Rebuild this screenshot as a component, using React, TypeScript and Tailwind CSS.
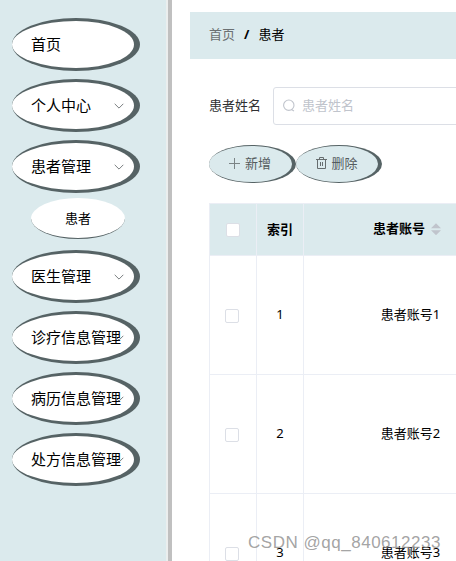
import React, { FunctionComponent } from "react";

interface MenuItem {
  name: string;
  arrow: boolean;
  children?: string[];
}

const menu: MenuItem[] = [
  { name: "首页", arrow: false },
  { name: "个人中心", arrow: true },
  { name: "患者管理", arrow: true, children: ["患者"] },
  { name: "医生管理", arrow: true },
  { name: "诊疗信息管理", arrow: true },
  { name: "病历信息管理", arrow: true },
  { name: "处方信息管理", arrow: true },
];

const rows = [1, 2, 3];

const Chevron: FunctionComponent = () => (
  <svg
    className="absolute right-[9px] top-[18px] h-3 w-3"
    viewBox="0 0 12 12"
    fill="none"
    stroke="#6b7072"
    strokeWidth="0.9"
  >
    <path d="M1.7 3.8 6 8.1l4.3-4.3" />
  </svg>
);

const Sidebar: FunctionComponent = () => (
  <aside className="w-[172px] shrink-0 border-r-4 border-[#c0c0c0] bg-[#dbeaed]">
    <div className="flex h-full flex-col items-start gap-2 border-r-2 border-[#ebeeee] pl-3 pt-[18px]">
      {menu.map((item) => (
        <div key={item.name} className="flex flex-col items-start">
          <div className="relative flex h-[53px] w-32 items-center whitespace-nowrap rounded-[50%] border-y-[3px] border-r-[6px] border-[#566365] bg-white pl-[19px] text-[15px] text-black">
            <span className="pb-0.5 leading-5">{item.name}</span>
            {item.arrow && <Chevron />}
          </div>
          {item.children?.map((child) => (
            <div
              key={child}
              className="mb-[3px] ml-[19px] mt-[5px] flex h-[41px] w-[94px] items-center justify-center rounded-[50%] border-b border-[#566365] bg-white pt-0.5 text-[13px] text-black"
            >
              {child}
            </div>
          ))}
        </div>
      ))}
    </div>
  </aside>
);

const SearchIcon: FunctionComponent = () => (
  <svg
    className="h-[14px] w-[14px] shrink-0"
    viewBox="0 0 14 14"
    fill="none"
    stroke="#c0c4cc"
    strokeWidth="1.1"
  >
    <circle cx="6.8" cy="6.2" r="5.2" />
    <path d="m9.4 10.6 2.6 1.4" />
  </svg>
);

const PlusIcon: FunctionComponent = () => (
  <svg className="h-[13px] w-[13px]" viewBox="0 0 13 13" fill="none" stroke="#7b8486">
    <path d="M1 6.5h11M6.5 1v11" />
  </svg>
);

const TrashIcon: FunctionComponent = () => (
  <svg className="h-[13px] w-[13px]" viewBox="0 0 13 13" fill="none" stroke="#666d6f">
    <path d="M1 2.5h11M4.5 2.5v-2h4v2M2.5 2.5v9h8v-9M5.5 5v4M7.5 5v4" />
  </svg>
);

const Checkbox: FunctionComponent = () => (
  <span className="block h-[14px] w-[14px] rounded-[2px] border border-[#dcdfe6] bg-white" />
);

const ActionButton: FunctionComponent<{ label: string; icon: React.ReactNode }> = ({
  label,
  icon,
}) => (
  <button className="flex h-[38px] w-[86.5px] items-center gap-1 rounded-[50%] border-y border-r-4 border-[#566365] bg-[#dbeaed] pb-0.5 pl-[19px] text-[13px] text-[#555c5e]">
    {icon}
    <span className="whitespace-nowrap leading-5">{label}</span>
  </button>
);

const PatientTable: FunctionComponent = () => (
  <div className="mt-5 w-[308px] shrink-0 border-l border-t border-[#ebeef5] text-[13px] text-black">
    <div className="grid h-[52px] grid-cols-[47px_47px_213px] border-b border-[#ebeef5] bg-[#dbeaed] font-bold">
      <div className="flex items-center justify-center border-r border-[#ebeef5]">
        <Checkbox />
      </div>
      <div className="flex items-center justify-center border-r border-[#ebeef5]">索引</div>
      <div className="flex items-center justify-center gap-[6px] pb-0.5 pr-[7px]">
        患者账号
        <svg className="h-3 w-[10px]" viewBox="0 0 10 12" fill="#c0c4cc">
          <path d="M0 5.2 5 .2l5 5zM0 7.2h10l-5 5z" />
        </svg>
      </div>
    </div>
    {rows.map((n) => (
      <div
        key={n}
        className="grid h-[119px] grid-cols-[47px_47px_213px] border-b border-[#ebeef5]"
      >
        <div className="flex items-center justify-center border-r border-[#ebeef5] pr-[3px] pt-px">
          <Checkbox />
        </div>
        <div className="flex items-center justify-center border-r border-[#ebeef5]">{n}</div>
        <div className="flex items-center justify-center">患者账号{n}</div>
      </div>
    ))}
  </div>
);

const App: FunctionComponent = () => {
  return (
    <div className="relative flex h-[561px] w-[456px] overflow-hidden bg-white font-['Noto_Sans','Noto_Sans_CJK_SC',sans-serif]">
      <Sidebar />
      <main className="flex min-w-0 flex-1 flex-col overflow-hidden pl-[18px] pt-3">
        <nav className="flex h-[47px] shrink-0 items-center bg-[#dbeaed] pb-0.5 pl-[19px] text-[13px]">
          <span className="text-[#6b7072]">首页</span>
          <span className="mx-[9px] font-bold text-black">/</span>
          <span className="text-black">患者</span>
        </nav>
        <div className="flex flex-col pl-[19px] pt-7">
          <div className="flex h-[38px] items-center gap-3 text-[13px]">
            <label className="shrink-0 text-[#303133]">患者姓名</label>
            <div className="flex h-[38px] w-[220px] shrink-0 items-center gap-[6px] rounded-[3px] border border-[#dcdfe6] pb-px pl-2 text-[#c0c4cc]">
              <SearchIcon />
              患者姓名
            </div>
          </div>
          <div className="mt-5 flex">
            <ActionButton label="新增" icon={<PlusIcon />} />
            <ActionButton label="删除" icon={<TrashIcon />} />
          </div>
          <PatientTable />
        </div>
      </main>
      <div className="absolute left-[248px] top-[533px] whitespace-nowrap font-['Liberation_Sans',sans-serif] text-[17px] leading-5 tracking-[0.52px] text-[#8c8c8c]/80">
        CSDN @qq_840612233
      </div>
    </div>
  );
};

export default App;
